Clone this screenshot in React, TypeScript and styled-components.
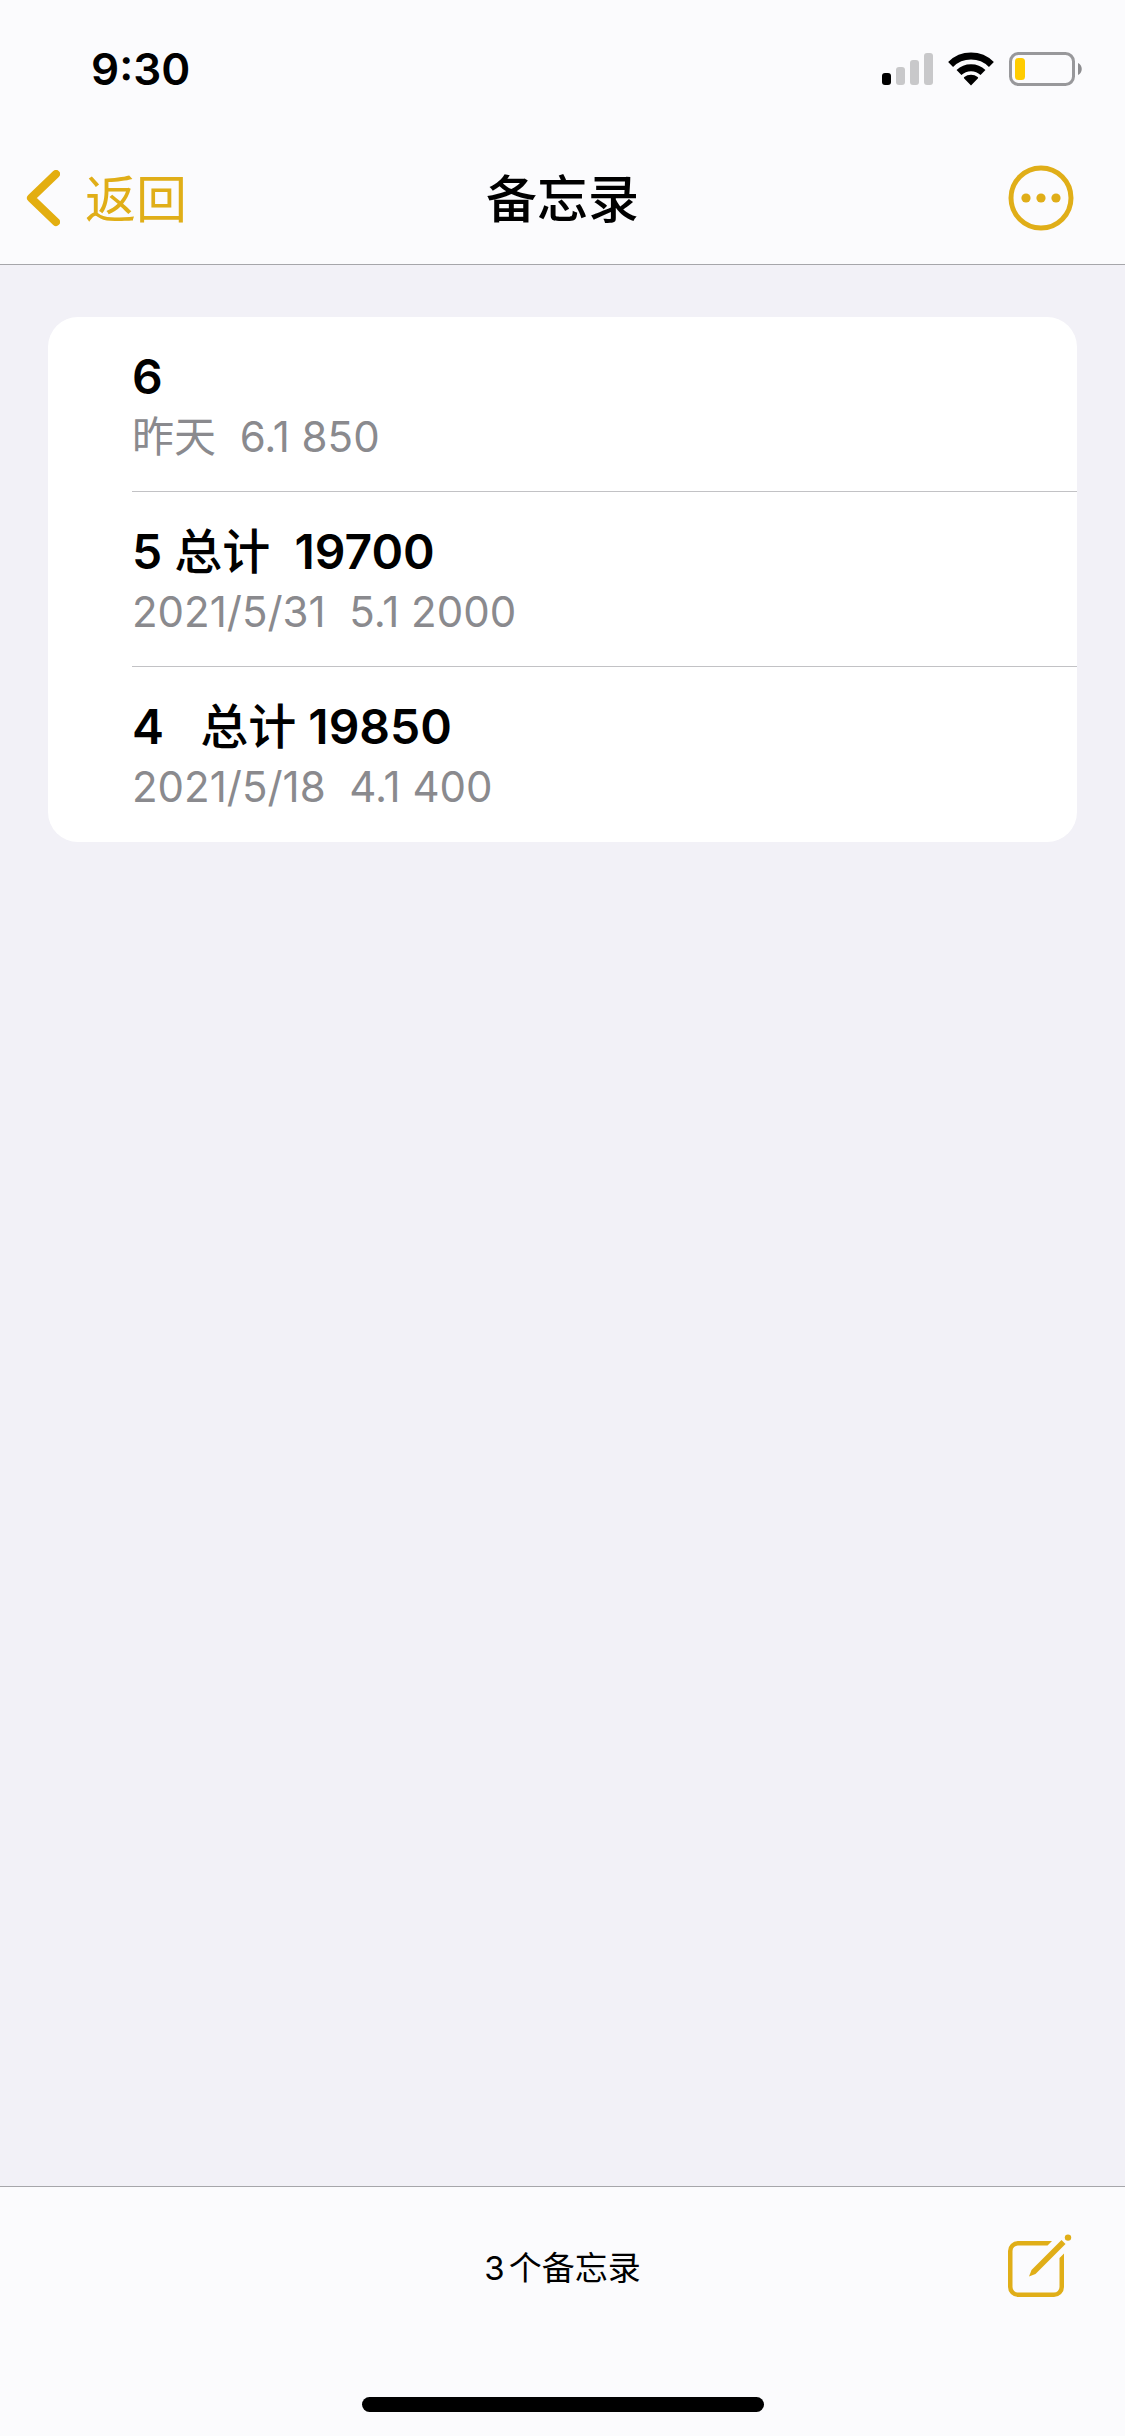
import React from "react";
import styled, { createGlobalStyle } from "styled-components";

const gold = "#e0ae18";
const ink = "#000000";
const barBackground = "#fbfbfd";
const hairline = "#a6a6aa";

const GlobalStyle = createGlobalStyle`
  * { box-sizing: border-box; }
  body {
    margin: 0;
    background: #f2f1f7;
    color: ${ink};
    font-family: Inter, "Noto Sans CJK SC", sans-serif;
  }
`;

const Screen = styled.div`
  display: flex;
  flex-direction: column;
  min-height: 100vh;
`;

const Header = styled.header`
  background: ${barBackground};
  border-bottom: 1px solid ${hairline};
`;

const StatusBar = styled.div`
  display: flex;
  align-items: center;
  justify-content: space-between;
  height: 132px;
  padding: 6px 43px 0 91px;
`;

const Clock = styled.time`
  font-size: 44px;
  line-height: 54px;
  font-weight: 600;
`;

const StatusIcons = styled.div`
  display: flex;
  align-items: center;
  gap: 15px;
`;

const NavBar = styled.nav`
  display: grid;
  grid-template-columns: 1fr auto 1fr;
  align-items: center;
  height: 132px;
  padding: 0 26px;
`;

const BackButton = styled.button`
  display: flex;
  align-items: center;
  justify-self: start;
  gap: 25px;
  padding: 0;
  border: 0;
  background: none;
  color: ${gold};
  font: inherit;
  cursor: pointer;
`;

const BackLabel = styled.span`
  padding-top: 4px;
  font-size: 51px;
  line-height: 60px;
`;

const IconButton = styled.button`
  display: flex;
  justify-self: end;
  padding: 0;
  border: 0;
  background: none;
  color: ${gold};
  cursor: pointer;
`;

const MoreButton = styled(IconButton)`
  margin-right: 25px;
`;

const Title = styled.h1`
  margin: 0;
  padding-top: 4px;
  font-size: 51px;
  line-height: 60px;
  font-weight: 500;
`;

const Main = styled.main`
  flex: 1;
  padding: 52px 48px;
`;

const NoteList = styled.ul`
  margin: 0;
  padding: 0;
  list-style: none;
  background: #ffffff;
  border-radius: 30px;
  overflow: hidden;
`;

const NoteItem = styled.li`
  padding-left: 84px;
`;

const NoteLink = styled.a<{ $divided: boolean }>`
  display: flex;
  flex-direction: column;
  justify-content: center;
  height: 175px;
  padding-top: 4px;
  border-bottom: 1px solid ${(p) => (p.$divided ? "#c2c2c5" : "transparent")};
  color: inherit;
  text-decoration: none;
  white-space: pre;
`;

const NoteTitle = styled.span`
  font-size: 48px;
  line-height: 62px;
  font-weight: 600;
`;

const HanText = styled.span`
  font-weight: 500;
`;

const NotePreview = styled.span`
  font-size: 42px;
  line-height: 58px;
  color: #8a8a8e;
`;

const Footer = styled.footer`
  background: ${barBackground};
  border-top: 1px solid ${hairline};
`;

const Toolbar = styled.div`
  display: grid;
  grid-template-columns: 1fr auto 1fr;
  align-items: center;
  height: 161px;
  padding: 0 51px;
`;

const Count = styled.p`
  grid-column: 2;
  margin: 0;
  font-size: 33px;
  line-height: 42px;
`;

const CountNumber = styled.span`
  margin-right: 4px;
`;

const HomeIndicator = styled.div`
  width: 402px;
  height: 15px;
  margin: 49px auto 24px;
  border-radius: 8px;
  background: ${ink};
`;

const SignalIcon = () => (
  <svg width="51" height="33" viewBox="0 0 51 33" aria-hidden="true">
    <rect x="0" y="20" width="9" height="12" rx="3" fill="#000" />
    <rect x="14" y="14" width="9" height="18" rx="3" fill="#c8c8ca" />
    <rect x="28" y="7" width="9" height="25" rx="3" fill="#c8c8ca" />
    <rect x="42" y="0" width="9" height="32" rx="3" fill="#c8c8ca" />
  </svg>
);

const WifiIcon = () => (
  <svg width="46" height="34" viewBox="0 0 46 34" aria-hidden="true">
    <g fill="none" stroke="#000" strokeWidth="7">
      <path d="M2.6 12.4A29 29 0 0 1 43.4 12.4" />
      <path d="M11 20.6A17.2 17.2 0 0 1 35 20.6" />
    </g>
    <path d="M23 33.4 16.2 26.6a1 1 0 0 1 .1-1.5 10.6 10.6 0 0 1 13.4 0 1 1 0 0 1 .1 1.5Z" fill="#000" />
  </svg>
);

const BatteryIcon = () => (
  <svg width="73" height="34" viewBox="0 0 73 34" aria-hidden="true">
    <rect x="1.5" y="1.5" width="63" height="31" rx="8" fill="none" stroke="#98989b" strokeWidth="3" />
    <rect x="6" y="6" width="10" height="22" rx="3.5" fill="#ffcc00" />
    <path d="M69 11c5 2 5 10 0 12Z" fill="#8d8d90" />
  </svg>
);

const ChevronIcon = () => (
  <svg width="34" height="57" viewBox="0 0 34 57" aria-hidden="true">
    <path
      d="M30 4 5 28 30 52"
      fill="none"
      stroke="#e3ae10"
      strokeWidth="8"
      strokeLinecap="round"
      strokeLinejoin="round"
    />
  </svg>
);

const MoreIcon = () => (
  <svg width="66" height="66" viewBox="0 0 66 66" aria-hidden="true">
    <circle cx="33" cy="33" r="30" fill="none" stroke="currentColor" strokeWidth="5" />
    <g fill="currentColor">
      <circle cx="18" cy="33" r="4.6" />
      <circle cx="33" cy="33" r="4.6" />
      <circle cx="48" cy="33" r="4.6" />
    </g>
  </svg>
);

const ComposeIcon = () => (
  <svg width="66" height="68" viewBox="0 0 66 68" aria-hidden="true">
    <path
      d="M44 7H10A10 10 0 0 0 0 17V53a10 10 0 0 0 10 10H46a10 10 0 0 0 10-10V19.500l-4.500 4.500V53a5.500 5.500 0 0 1-5.500 5.500H10a5.500 5.500 0 0 1-5.500-5.500V17a5.500 5.500 0 0 1 5.500-5.500H39.500Z"
      fill="currentColor"
    />
    <path d="M53.500 6 57.500 10 27.500 40 21 42.500 23.500 36Z" fill="currentColor" />
    <circle cx="60" cy="3.600" r="3.200" fill="currentColor" />
  </svg>
);

const notes = [
  { title: "6", preview: "昨天  6.1 850" },
  { title: "5 总计  19700", preview: "2021/5/31  5.1 2000" },
  { title: "4   总计 19850", preview: "2021/5/18  4.1 400" },
];

const renderTitle = (title: string) =>
  title
    .split(/([\u4e00-\u9fff]+)/)
    .map((part, index) => (index % 2 ? <HanText key={index}>{part}</HanText> : part));

export default function App() {
  return (
    <Screen>
      <GlobalStyle />
      <Header>
        <StatusBar>
          <Clock>9:30</Clock>
          <StatusIcons>
            <SignalIcon />
            <WifiIcon />
            <BatteryIcon />
          </StatusIcons>
        </StatusBar>
        <NavBar>
          <BackButton type="button">
            <ChevronIcon />
            <BackLabel>返回</BackLabel>
          </BackButton>
          <Title>备忘录</Title>
          <MoreButton type="button" aria-label="更多">
            <MoreIcon />
          </MoreButton>
        </NavBar>
      </Header>
      <Main>
        <NoteList>
          {notes.map((note, index) => (
            <NoteItem key={note.title}>
              <NoteLink href="#" $divided={index < notes.length - 1}>
                <NoteTitle>{renderTitle(note.title)}</NoteTitle>
                <NotePreview>{note.preview}</NotePreview>
              </NoteLink>
            </NoteItem>
          ))}
        </NoteList>
      </Main>
      <Footer>
        <Toolbar>
          <Count>
            <CountNumber>{notes.length}</CountNumber>
            个备忘录
          </Count>
          <IconButton type="button" aria-label="新建备忘录">
            <ComposeIcon />
          </IconButton>
        </Toolbar>
        <HomeIndicator />
      </Footer>
    </Screen>
  );
}
